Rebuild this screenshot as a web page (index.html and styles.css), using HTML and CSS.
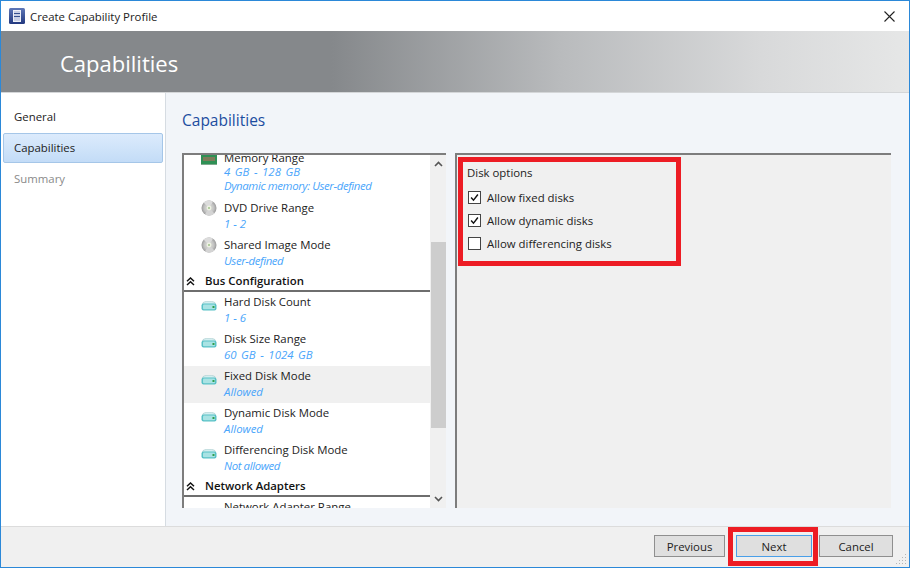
FILE: index.html
```html
<!DOCTYPE html>
<html lang="en">
<head>
<meta charset="utf-8">
<title>Create Capability Profile</title>
<link rel="stylesheet" href="styles.css">
</head>
<body>
<svg class="defs" width="0" height="0" aria-hidden="true">
  <defs>
    <linearGradient id="appgrad" x1="0" y1="0" x2="0" y2="1">
      <stop offset="0" stop-color="#5f78b8"/>
      <stop offset="1" stop-color="#22387f"/>
    </linearGradient>
    <radialGradient id="discgrad" cx=".5" cy=".5" r=".55">
      <stop offset="0" stop-color="#e4e6dc"/>
      <stop offset=".6" stop-color="#c2c2c2"/>
      <stop offset="1" stop-color="#8e8e8e"/>
    </radialGradient>
  </defs>
  <symbol id="ram" viewBox="0 0 16 10">
    <rect x="0" y="0" width="16" height="9" fill="#2f9055"/>
    <rect x="2" y="2" width="12" height="4" fill="#2e2e22"/>
    <path d="M3 2v4M5 2v4M7 2v4M9 2v4M11 2v4M13 2v4" stroke="#cfcb94" stroke-width="1"/>
    <path d="M0 9.5h16" stroke="#7fa98d" stroke-width="1"/>
  </symbol>
  <symbol id="disc" viewBox="0 0 16 16">
    <circle cx="8" cy="8" r="7.5" fill="url(#discgrad)"/>
    <path d="M8 8 L2.5 2.5 A7.5 7.5 0 0 1 12 1.8Z" fill="#dcdcdc"/>
    <path d="M8 8 L13.5 13.5 A7.5 7.5 0 0 1 4 14.2Z" fill="#d4d4d4"/>
    <circle cx="8" cy="8" r="2.4" fill="#eef2e4"/>
    <circle cx="8" cy="8" r="1" fill="#9fc28a"/>
  </symbol>
  <symbol id="disk" viewBox="0 0 16 10">
    <ellipse cx="8" cy="2.6" rx="6.5" ry="2.4" fill="#d4eef0" stroke="#9fc6c8" stroke-width=".6"/>
    <rect x="0.5" y="2.5" width="15" height="7" rx="2" fill="#58c1c6"/>
    <rect x="2" y="3.6" width="12" height="4.6" rx="1" fill="#a9e3e4"/>
    <rect x="11.5" y="5" width="2" height="2" fill="#2f9e4c"/>
  </symbol>
  <symbol id="dbl" viewBox="0 0 9 9">
    <path d="M1 4.2 4.5 1 8 4.2M1 8 4.5 4.8 8 8" fill="none" stroke="#111" stroke-width="1.5"/>
  </symbol>
</svg>

<div class="window">
  <header class="titlebar">
    <svg class="appicon" viewBox="0 0 16 16" aria-hidden="true">
      <rect width="16" height="16" rx="1.5" fill="url(#appgrad)"/>
      <rect x="4.5" y="2.5" width="7" height="11" fill="#c8d0e6" stroke="#eef1f8" stroke-width="1"/>
      <path d="M5 5.5h6M5 8.5h6" stroke="#34508f" stroke-width="1"/>
    </svg>
    <span class="titletext">Create Capability Profile</span>
    <svg class="close" viewBox="0 0 11 11" aria-hidden="true">
      <path d="M.5.5 10.5 10.5M10.5.5.5 10.5" stroke="#222" stroke-width="1.1"/>
    </svg>
  </header>

  <div class="banner">Capabilities</div>

  <div class="main">
    <nav class="nav">
      <div class="navitem">General</div>
      <div class="navitem navitem-active">Capabilities</div>
      <div class="navitem navitem-off">Summary</div>
    </nav>

    <section class="content">
      <h2 class="heading">Capabilities</h2>
      <div class="panels">
        <div class="listpanel">
          <div class="listclip">
            <div class="listinner">
              <div class="row row-tall">
                <svg class="ico ico-ram"><use href="#ram"/></svg>
                <div class="rowtext">
                  <div class="name">Memory Range</div>
                  <div class="val val-tight val-wide">4 GB - 128 GB</div>
                  <div class="val val-tight val-narrow">Dynamic memory: User-defined</div>
                </div>
              </div>
              <div class="row">
                <svg class="ico ico-disc"><use href="#disc"/></svg>
                <div class="rowtext"><div class="name">DVD Drive Range</div><div class="val">1 - 2</div></div>
              </div>
              <div class="row">
                <svg class="ico ico-disc"><use href="#disc"/></svg>
                <div class="rowtext"><div class="name">Shared Image Mode</div><div class="val val-narrow">User-defined</div></div>
              </div>
              <div class="section"><svg class="dbl"><use href="#dbl"/></svg>Bus Configuration</div>
              <div class="row">
                <svg class="ico ico-disk"><use href="#disk"/></svg>
                <div class="rowtext"><div class="name">Hard Disk Count</div><div class="val">1 - 6</div></div>
              </div>
              <div class="row">
                <svg class="ico ico-disk"><use href="#disk"/></svg>
                <div class="rowtext"><div class="name">Disk Size Range</div><div class="val val-wide">60 GB - 1024 GB</div></div>
              </div>
              <div class="row row-selected">
                <svg class="ico ico-disk"><use href="#disk"/></svg>
                <div class="rowtext"><div class="name">Fixed Disk Mode</div><div class="val">Allowed</div></div>
              </div>
              <div class="row">
                <svg class="ico ico-disk"><use href="#disk"/></svg>
                <div class="rowtext"><div class="name">Dynamic Disk Mode</div><div class="val">Allowed</div></div>
              </div>
              <div class="row">
                <svg class="ico ico-disk"><use href="#disk"/></svg>
                <div class="rowtext"><div class="name">Differencing Disk Mode</div><div class="val val-narrow">Not allowed</div></div>
              </div>
              <div class="section"><svg class="dbl"><use href="#dbl"/></svg>Network Adapters</div>
              <div class="row">
                <div class="ico ico-blank"></div>
                <div class="rowtext"><div class="name">Network Adapter Range</div></div>
              </div>
            </div>
          </div>
          <div class="scrollbar">
            <svg class="chev" viewBox="0 0 9 6"><path d="M1 5 4.5 1.5 8 5" fill="none" stroke="#555" stroke-width="1.6"/></svg>
            <div class="track"><div class="thumb"></div></div>
            <svg class="chev" viewBox="0 0 9 6"><path d="M1 1 4.5 4.5 8 1" fill="none" stroke="#555" stroke-width="1.6"/></svg>
          </div>
        </div>

        <div class="detail">
          <div class="detailtitle">Disk options</div>
          <label class="check"><span class="box"><svg viewBox="0 0 13 13"><path d="M2.5 6.5 5.3 9.6 10.5 3" fill="none" stroke="#111" stroke-width="1.7"/></svg></span>Allow fixed disks</label>
          <label class="check"><span class="box"><svg viewBox="0 0 13 13"><path d="M2.5 6.5 5.3 9.6 10.5 3" fill="none" stroke="#111" stroke-width="1.7"/></svg></span>Allow dynamic disks</label>
          <label class="check"><span class="box"></span>Allow differencing disks</label>
        </div>
      </div>
    </section>
  </div>

  <footer class="footer">
    <button class="btn btn-prev">Previous</button>
    <button class="btn btn-next">Next</button>
    <button class="btn btn-cancel">Cancel</button>
    <svg class="grip" viewBox="0 0 12 12" aria-hidden="true">
      <path d="M10 1h1v1h-1zM7 4h1v1H7zM10 4h1v1h-1zM4 7h1v1H4zM7 7h1v1H7zM10 7h1v1h-1zM1 10h1v1H1zM4 10h1v1H4zM7 10h1v1H7zM10 10h1v1h-1z" fill="#b5b5b5"/>
    </svg>
  </footer>

  <div class="mark mark-options"></div>
  <div class="mark mark-next"></div>
</div>
</body>
</html>
```
FILE: styles.css
```css
* { box-sizing: border-box; }
html, body { margin: 0; padding: 0; background: #fff; }
body {
  width: 912px;
  height: 570px;
  overflow: hidden;
  font-family: "Open Sans", "Noto Sans", sans-serif;
  font-size: 11.4px;
  color: #222;
}
.defs { position: absolute; }

.window {
  position: relative;
  width: 910px;
  height: 568px;
  border: 1px solid #2b88d8;
  display: flex;
  flex-direction: column;
  background: #fff;
}

.titlebar {
  height: 30px;
  flex: none;
  display: flex;
  align-items: center;
  padding: 0 14px 0 8px;
  background: #fff;
}
.appicon { width: 16px; height: 16px; margin-right: 5px; }
.titletext { flex: 1; color: #222; }
.close { width: 11px; height: 11px; }

.banner {
  height: 62px;
  flex: none;
  padding: 16px 0 0 59px;
  font-size: 22px;
  line-height: 32px;
  color: #fff;
  background: linear-gradient(90deg, #85888b 0, #85888b 330px, #b9bbbd 560px, #d8d9da 760px, #e6e7e7 100%);
  border-bottom: 1px solid #d4d6d8;
}

.main { flex: 1; display: flex; min-height: 0; }

.nav {
  width: 165px;
  flex: none;
  padding: 9px 2px 0 2px;
  border-right: 1px solid #d6dce2;
  background: #fff;
  display: flex;
  flex-direction: column;
  gap: 1px;
}
.navitem {
  height: 30px;
  line-height: 27px;
  padding-left: 10px;
  border: 1px solid transparent;
  color: #222;
}
.navitem-active {
  background: linear-gradient(180deg, #dcebfc, #c3dcf7);
  border-color: #a5c6e8;
  border-radius: 2px;
}
.navitem-off { color: #8a8a8a; }

.content {
  flex: 1;
  background: #f2f5f9;
  padding: 14px 18px 0 16px;
  display: flex;
  flex-direction: column;
  min-width: 0;
}
.heading {
  margin: 0;
  font-size: 15.5px;
  font-weight: 400;
  line-height: 26px;
  color: #1c4da0;
}
.panels {
  margin-top: 20px;
  height: 355px;
  display: flex;
  gap: 9px;
}

.listpanel {
  width: 264px;
  flex: none;
  display: flex;
  background: #fff;
  border-top: 2px solid #7d7d7d;
  border-left: 2px solid #7d7d7d;
}
.listclip { flex: 1; overflow: hidden; min-width: 0; }
.listinner { margin-top: -7px; }

.row { height: 37px; display: flex; }
.row-tall { height: 50px; }
.row-selected { background: #f0f0f0; }
.ico { flex: none; display: block; }
.ico-blank { width: 40px; }
.ico-ram { height: 10px; width: 16px; margin: 7px 7px 0 17px; }
.ico-disc { height: 16px; width: 16px; margin: 2px 7px 0 17px; }
.ico-disk { height: 10px; width: 16px; margin: 9px 7px 0 17px; }
.rowtext { padding-top: 2px; min-width: 0; }
.name { line-height: 16px; white-space: nowrap; color: #222; }
.val {
  line-height: 16px;
  white-space: nowrap;
  font-style: italic;
  color: #4aa5fb;
}
.val-tight { line-height: 14px; }
.name + .val-tight { margin-top: -1px; }
.val-narrow { letter-spacing: -.38px; }
.val-wide { word-spacing: 1.6px; }

.section {
  height: 20px;
  display: flex;
  align-items: center;
  padding-left: 2px;
  font-weight: 600;
  line-height: 18px;
  color: #111;
  border-bottom: 2px solid #6e6e6e;
}
.dbl { width: 9px; height: 9px; margin-right: 10px; flex: none; }

.scrollbar {
  width: 16px;
  flex: none;
  background: #f0f0f0;
  display: flex;
  flex-direction: column;
  align-items: center;
}
.chev { width: 9px; height: 6px; flex: none; margin: 6px 0; }
.track { flex: 1; width: 100%; padding-top: 69px; padding-left: 1px; }
.thumb { height: 186px; background: #cdcdcd; }

.detail {
  flex: 1;
  background: #f0f0f0;
  border-top: 2px solid #7d7d7d;
  border-left: 2px solid #7d7d7d;
  padding: 10px 0 0 10px;
}
.detailtitle { line-height: 16px; margin-bottom: 5px; }
.check { display: flex; align-items: center; height: 23px; }
.box {
  width: 13px;
  height: 13px;
  margin-right: 6px;
  margin-left: 1px;
  background: #fff;
  border: 1px solid #444;
  display: block;
  flex: none;
}
.box svg { display: block; width: 11px; height: 11px; }

.footer {
  height: 41px;
  flex: none;
  position: relative;
  background: #f0f0f0;
  border-top: 1px solid #dcdcdc;
  display: flex;
  padding: 8px 0 0 653px;
}
.btn {
  height: 22px;
  padding: 0;
  font: inherit;
  color: #222;
  background: #dfdfdf;
  border: 1px solid #8f8f8f;
}
.btn-prev { width: 71px; margin-right: 11px; }
.btn-next { width: 76px; margin-right: 7px; border-color: #4a9fe8; }
.btn-cancel { width: 74px; }
.grip { position: absolute; right: 2px; bottom: 2px; width: 12px; height: 12px; }

.mark { position: absolute; border: 5px solid #ed1c24; pointer-events: none; }
.mark-options { left: 457px; top: 156px; width: 223px; height: 109px; }
.mark-next { left: 727px; top: 526px; width: 90px; height: 39px; }
```
